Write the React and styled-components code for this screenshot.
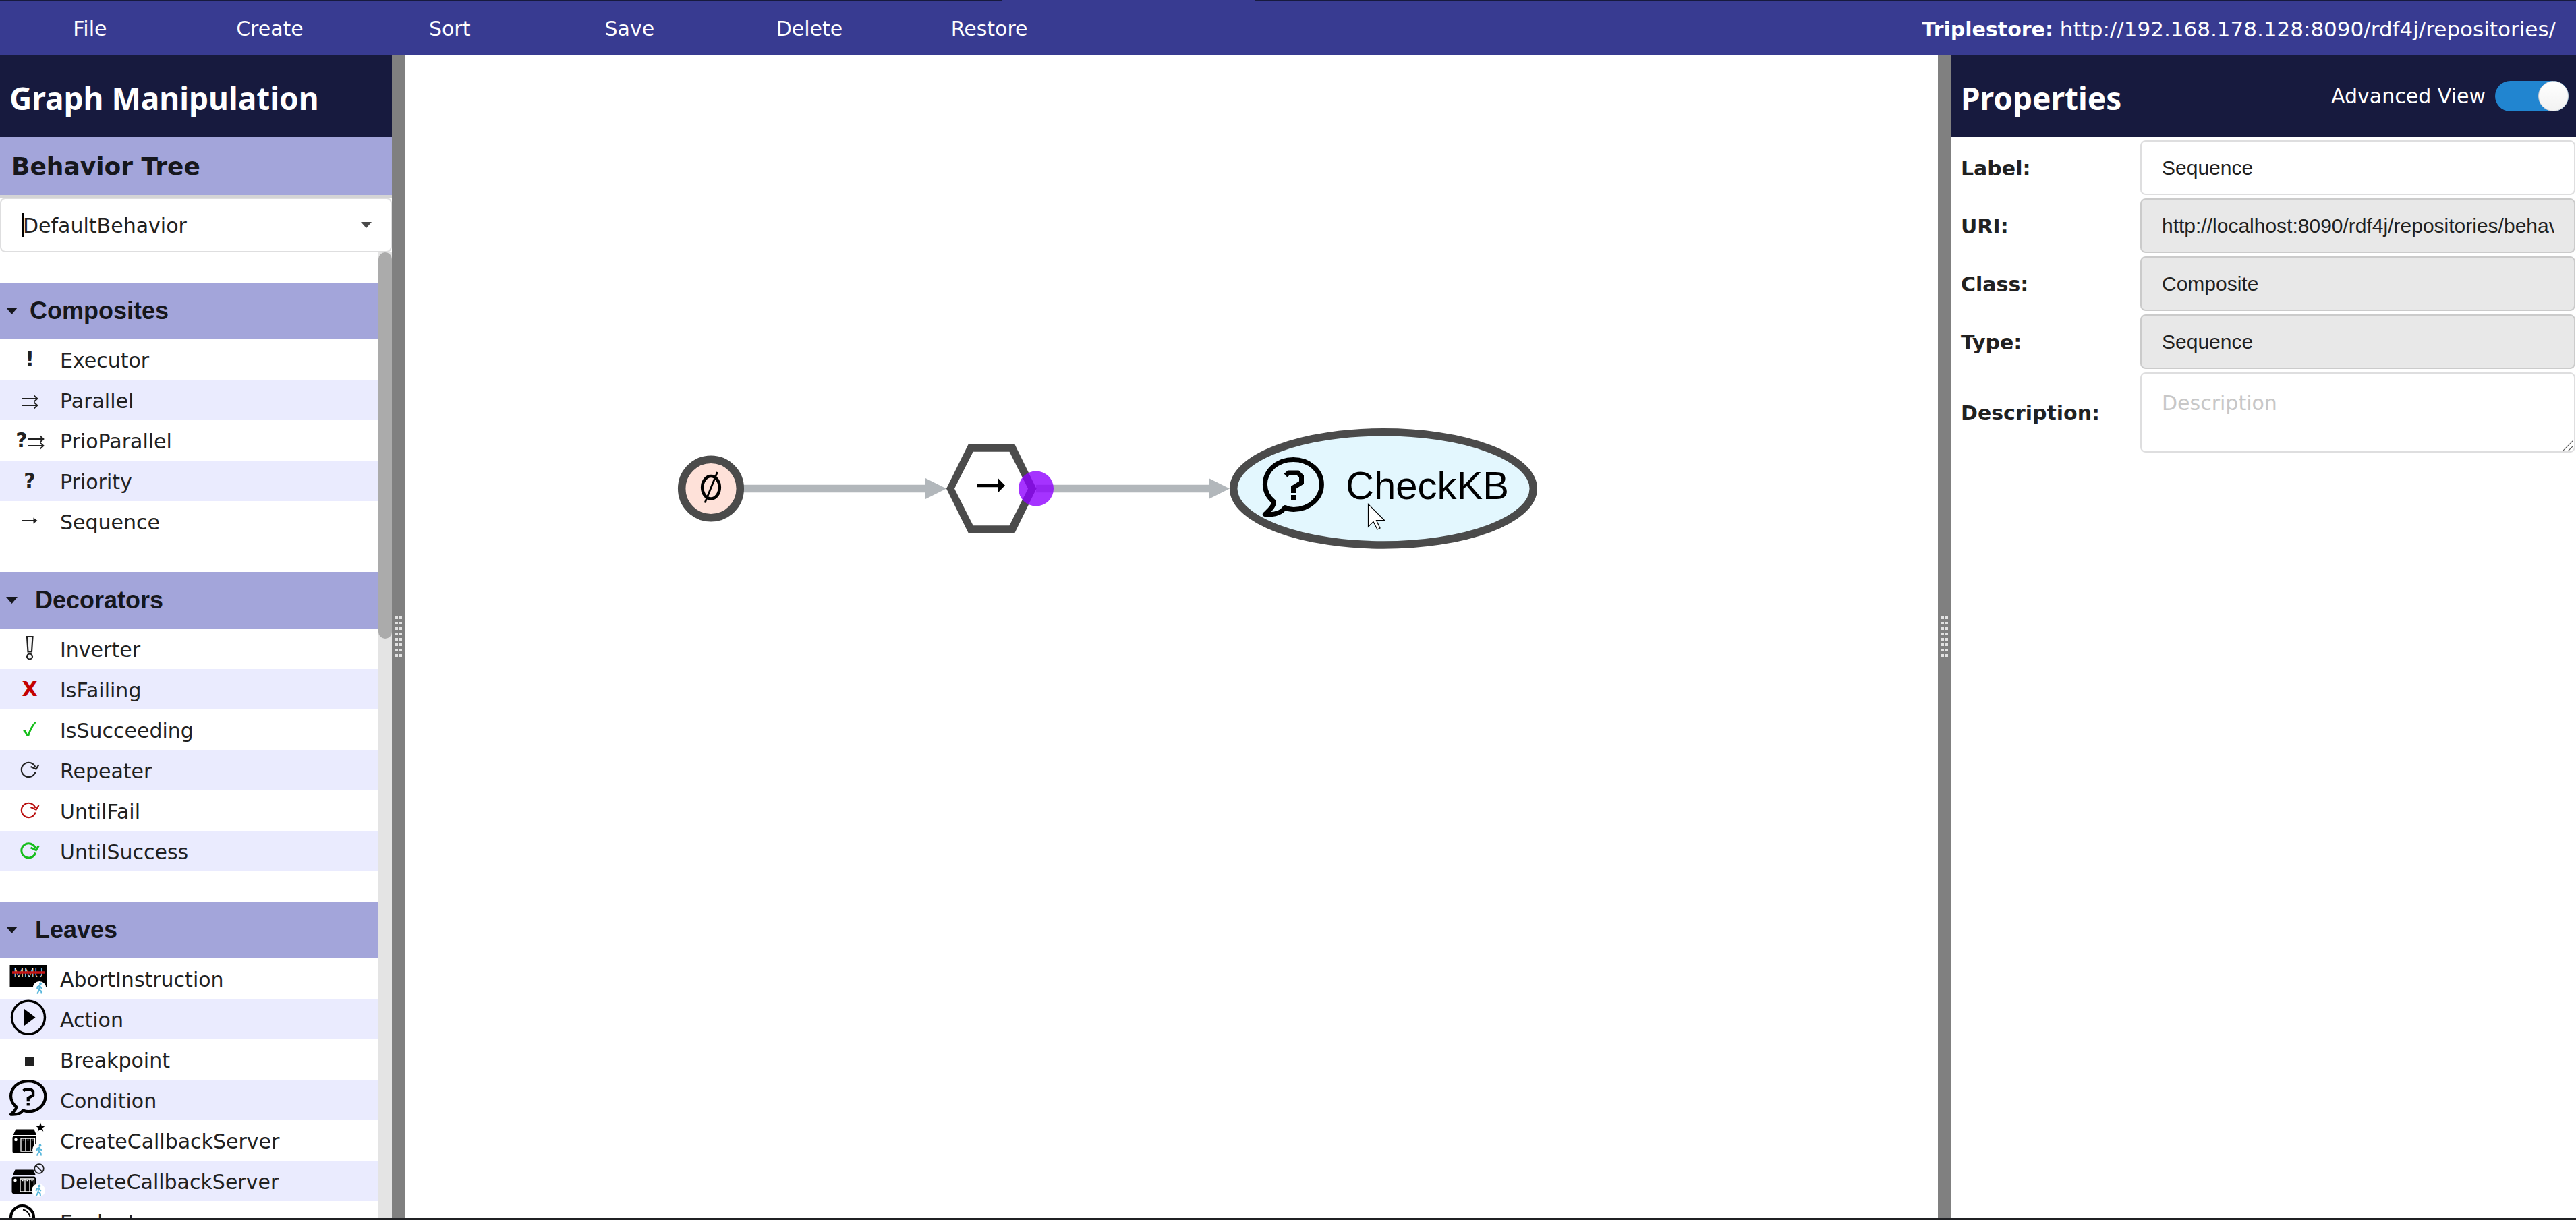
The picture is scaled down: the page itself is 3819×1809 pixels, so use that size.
import React from "react";
import styled, { createGlobalStyle } from "styled-components";

const sans = `Verdana, "DejaVu Sans", sans-serif`;
const arial = `"Liberation Sans", Arial, sans-serif`;
const title = `"Segoe UI", "Noto Sans", "Open Sans", sans-serif`;

const Global = createGlobalStyle`
  *, *::before, *::after { box-sizing: border-box; }
  body { margin: 0; background: #fff; color: #212121; font: 30px/36px ${sans}; overflow: hidden; }
  button, input, select, textarea { font: inherit; color: inherit; margin: 0; }
`;

const Page = styled.div`
  display: flex;
  flex-direction: column;
  height: 100vh;
  border-bottom: 3px solid #202124;
`;

const TabStrip = styled.div`
  display: grid;
  grid-template-columns: 1486fr 374fr 1959fr;
  flex: none;
  height: 2px;
  background: #171a3e;
`;

const ActiveTab = styled.div`
  grid-column: 2;
  background: #383b91;
`;

const MenuBar = styled.header`
  display: flex;
  flex: none;
  align-items: center;
  justify-content: space-between;
  height: 80px;
  padding-right: 30px;
  background: #383b91;
  color: #fff;
`;

const Menu = styled.nav`
  display: grid;
  grid-template-columns: repeat(6, 1fr);
  width: 1600px;
`;

const MenuItem = styled.button`
  height: 80px;
  padding: 2px 0 0;
  border: 0;
  background: none;
  text-align: center;
`;

const Store = styled.p`
  margin: 0;
  padding-top: 2px;
  white-space: pre;
  font-size: 31px;
`;

const StoreName = styled.strong`
  font-size: 30px;
`;

const Workspace = styled.div`
  display: grid;
  grid-template-columns: 581px 20px 1fr 20px 926px;
  flex: 1;
  min-height: 0;
`;

const Panel = styled.section`
  display: flex;
  flex-direction: column;
  min-width: 0;
  min-height: 0;
`;

const PanelHead = styled.div`
  display: flex;
  flex: none;
  align-items: center;
  justify-content: space-between;
  height: 121px;
  padding: 0 11px 0 14px;
  background: #171a3e;
  color: #fff;
`;

const PanelTitle = styled.h1`
  margin: 0;
  padding-top: 4px;
  font: bold 46px/60px ${title};
`;

const TreeTitle = styled.h2`
  flex: none;
  margin: 0;
  height: 90px;
  padding: 2px 0 0 17px;
  border-bottom: 4px solid #d4d4d5;
  background: #a3a5da;
  color: #16171d;
  font: bold 36px/84px ${sans};
`;

const Picker = styled.div`
  display: flex;
  position: relative;
  flex: none;
  align-items: center;
`;

const PickerSelect = styled.select`
  appearance: none;
  width: 100%;
  height: 81px;
  padding: 2px 32px 0;
  border: 2px solid #dededf;
  border-radius: 8px;
  background: #fff;
`;

const PickerCaret = styled.svg`
  position: absolute;
  right: 30px;
  width: 16px;
  height: 9px;
  pointer-events: none;
`;

const TextCursor = styled.span`
  position: absolute;
  left: 33px;
  width: 2px;
  height: 36px;
  background: #000;
`;

const ListArea = styled.div`
  display: flex;
  flex: 1;
  min-height: 0;
`;

const Lists = styled.div`
  flex: 1;
  overflow: hidden;
`;

const Track = styled.div`
  width: 20px;
  background: #e4e4e4;
`;

const Thumb = styled.div`
  height: 40%;
  border-radius: 10px;
  background: #ababab;
`;

const Group = styled.section`
  padding-top: 45px;
`;

const GroupHead = styled.button`
  display: flex;
  align-items: center;
  gap: ${(p) => (p.$wide ? 26 : 18)}px;
  width: 100%;
  height: 84px;
  padding: 0 9px;
  border: 0;
  background: #a3a5da;
  color: #16171d;
  font: bold 36px/42px ${arial};
`;

const Items = styled.ul`
  margin: 0;
  padding: 0;
  list-style: none;
`;

const Item = styled.li`
  &:nth-child(even) { background: #eaebfe; }
`;

const ItemButton = styled.button`
  display: flex;
  align-items: center;
  width: 100%;
  height: 60px;
  padding: 0;
  border: 0;
  background: none;
`;

const ItemName = styled.span`
  padding: 3px 0 0 1px;
`;

const Icon = styled.svg`
  flex: none;
  width: 88px;
  height: 60px;
`;

const Splitter = styled.div`
  display: flex;
  align-items: center;
  justify-content: center;
  background: #808080;
`;

const Grip = styled.svg`
  width: 10px;
  height: 60px;
`;

const Canvas = styled.main`
  position: relative;
  overflow: hidden;
  min-width: 0;
`;

const Graph = styled.svg`
  display: block;
  width: 2272px;
  height: 100%;
`;

const ViewSwitch = styled.label`
  display: flex;
  align-items: center;
  gap: 14px;
`;

const Switch = styled.input`
  appearance: none;
  display: flex;
  justify-content: flex-end;
  width: 109px;
  height: 45px;
  border-radius: 23px;
  background: #2185d0;
  &::before {
    content: "";
    width: 45px;
    height: 45px;
    border: 1px solid #cfd0d4;
    border-radius: 50%;
    background: linear-gradient(#fff, #f2f2f2);
  }
`;

const Form = styled.form`
  display: grid;
  grid-template-columns: 266px 1fr;
  align-items: center;
  row-gap: 5px;
  padding: 5px 1px 0 14px;
`;

const FieldLabel = styled.label`
  padding-top: 2px;
  font-weight: bold;
`;

const Field = styled.input`
  width: 100%;
  height: 81px;
  padding: 0 30px;
  border: 2px solid ${(p) => (p.readOnly ? "#cbcbcb" : "#dededf")};
  border-radius: 8px;
  background: ${(p) => (p.readOnly ? "#e8e8e8" : "#fff")};
  font-family: ${arial};
  outline: 0;
`;

const AreaBox = styled.div`
  position: relative;
`;

const Area = styled.textarea`
  display: block;
  width: 100%;
  height: 119px;
  padding: 26px 30px;
  border: 2px solid #dededf;
  border-radius: 8px;
  resize: none;
  &::placeholder { color: #c7c7c7; opacity: 1; }
`;

const AreaGrip = styled.svg`
  position: absolute;
  right: 3px;
  bottom: 2px;
  width: 16px;
  height: 16px;
  pointer-events: none;
`;

const INK = "#212121";

const Glyph = ({ x = 44, fill = INK, children }) => (
  <text x={x} y="40" textAnchor="middle" fill={fill} fontWeight="bold" fontSize="30">{children}</text>
);

const TwinArrows = ({ x = 33 }) => (
  <path
    transform={`translate(${x} 0)`}
    d="M0 28H22M17.500 23.500L22.500 28L17.500 32.500M0 38H22M17.500 33.500L22.500 38L17.500 42.500"
    fill="none" stroke={INK} strokeWidth="1.800"
  />
);

const Loop = ({ color, weight = 2.2 }) => (
  <g fill="none" stroke={color} strokeWidth={weight}>
    <path d="M52.600 32.500A10.600 10.600 0 1 1 52.500 26" />
    <path d="M45.500 25L53.500 28.500L57.500 22" />
  </g>
);

const Walker = ({ x, y, r = 10 }) => (
  <g transform={`translate(${x} ${y})`}>
    <circle r={r} fill="#fff" />
    <circle cx="1.500" cy="-6.500" r="1.900" fill="#5bb8dc" />
    <path
      d="M0.500 -4L-0.500 2L2.500 4.500L3 8.500M-0.500 2L-1.500 5L-3.500 8.500M-3.500 1L-2.800 -2L0.500 -3.500L2.200 -0.500L4.200 0.500"
      fill="none" stroke="#5bb8dc" strokeWidth="2"
    />
  </g>
);

const Bubble = ({ transform }) => (
  <g transform={transform} fill="none" stroke="#000" strokeWidth="7" strokeLinejoin="round">
    <path d="M33 74.500Q39 77.400 46 77.400C69 77.400 87.400 61 87.400 40.300S69 3.400 45.300 3.400S3.400 20 3.400 40.300C3.400 51 9 60 16.500 66C17 73 9 79 3.400 84.500C16 85.500 27 84 33 74.500Z" />
    <path d="M34 27L38.500 23H52L57.500 28.500V37.500L45.500 45V53" strokeLinejoin="miter" />
    <path d="M42 59.500H49" />
  </g>
);

const Server = ({ x = 0, children }) => (
  <g transform={`translate(${x} 0)`}>
    <path d="M23.500 13.500H50.500L54 22H19.500Z" />
    <rect x="18.500" y="23.500" width="35.500" height="25.500" rx="3" />
    <circle cx="23.500" cy="29" r="2.300" fill="#fff" />
    <path d="M31 27H51.500V46H31ZM38 27V46M45 27V46" fill="none" stroke="#fff" strokeWidth="1.300" />
    <path d="M33.500 29.500H35.500M40.500 29.500H42.500M47.500 29.500H49.500" stroke="#fff" strokeWidth="1.500" />
    {children}
  </g>
);

const icons = {
  Executor: <Glyph>!</Glyph>,
  Parallel: <TwinArrows />,
  PrioParallel: <><Glyph x={32}>?</Glyph><TwinArrows x={42} /></>,
  Priority: <Glyph>?</Glyph>,
  Sequence: <><path d="M33 29H51" stroke={INK} strokeWidth="2" /><path d="M49.500 24.500L55.500 29L49.500 33.500Z" fill={INK} /></>,
  Inverter: (
    <g fill="#f4f4f4" stroke={INK} strokeWidth="2.200">
      <path d="M40 12H48.500L47 34.500H41.500Z" /><circle cx="44" cy="41.500" r="4" />
    </g>
  ),
  IsFailing: <Glyph fill="#c40000">X</Glyph>,
  IsSucceeding: <path d="M34 31.500L37.500 30.500Q39.500 33 41 37Q45 25 52 18H54.500Q46 29 43 40H40Q37 34.500 34 31.500Z" fill="#15bd1a" />,
  Repeater: <Loop color={INK} />,
  UntilFail: <Loop color="#b80d0d" />,
  UntilSuccess: <Loop color="#15bd1a" weight={3} />,
  AbortInstruction: (
    <>
      <rect x="14.500" y="10" width="55" height="33" />
      <text x="42" y="28" textAnchor="middle" fill="#fff" fontFamily="Open Sans, sans-serif" fontWeight="300" fontSize="18">MMU</text>
      <path d="M18 21H66" stroke="#c61414" strokeWidth="3.500" />
      <Walker x={58.5} y={44} />
    </>
  ),
  Action: <><circle cx="42" cy="27.600" r="24.500" fill="none" stroke="#000" strokeWidth="3.400" /><path d="M36 15L52.500 27.600L36 40Z" /></>,
  Breakpoint: <rect x="37" y="26" width="14" height="14" fill={INK} />,
  Condition: <Bubble transform="translate(14 0) scale(0.61)" />,
  CreateCallbackServer: (
    <Server>
      <path d="M60 3.500L61.800 8.500L67 8.600L62.800 11.800L64.300 16.800L60 13.800L55.700 16.800L57.200 11.800L53 8.600L58.200 8.500Z" />
      <Walker x={58} y={44} />
    </Server>
  ),
  DeleteCallbackServer: (
    <Server x={-1}>
      <circle cx="59" cy="12" r="6.800" fill="none" stroke={INK} strokeWidth="1.700" />
      <path d="M54.200 7.200L63.800 16.800" stroke={INK} strokeWidth="1.700" />
      <Walker x={58} y={44} />
    </Server>
  ),
  Evaluate: (
    <g fill="none" stroke="#000">
      <circle cx="33" cy="24" r="17" strokeWidth="4.200" /><path d="M34 12.500Q42 14 44.500 23" strokeWidth="2" />
    </g>
  ),
};

const groups = [
  { name: "Composites", items: ["Executor", "Parallel", "PrioParallel", "Priority", "Sequence"] },
  { name: "Decorators", wide: true, items: ["Inverter", "IsFailing", "IsSucceeding", "Repeater", "UntilFail", "UntilSuccess"] },
  { name: "Leaves", wide: true, items: ["AbortInstruction", "Action", "Breakpoint", "Condition", "CreateCallbackServer", "DeleteCallbackServer", "Evaluate"] },
];

const fields = [
  { name: "Label", value: "Sequence" },
  { name: "URI", value: "http://localhost:8090/rdf4j/repositories/behavior", locked: true },
  { name: "Class", value: "Composite", locked: true },
  { name: "Type", value: "Sequence", locked: true },
];

const Handle = () => (
  <Splitter>
    <Grip viewBox="0 0 10 60" aria-hidden="true">
      {Array.from({ length: 8 }, (_, i) => (
        <path key={i} d={`M0 ${2 + i * 8}H4M6 ${2 + i * 8}H10`} stroke="#e2e2e2" strokeWidth="4" />
      ))}
    </Grip>
  </Splitter>
);

const BehaviorGraph = () => (
  <Graph viewBox="601 82 2272 1724" preserveAspectRatio="xMinYMin meet" role="img" aria-label="Behavior tree graph">
    <g stroke="#b2b7bb" strokeWidth="11.500">
      <path d="M1100 724.500H1374" /><path d="M1536 724.500H1794" />
    </g>
    <path d="M1372 709L1403 724.500L1372 740ZM1792 709L1823 724.500L1792 740Z" fill="#b2b7bb" />
    <circle cx="1054" cy="724.500" r="43.300" fill="#fee1d9" stroke="#4b4b4b" strokeWidth="11.500" />
    <g fill="none" stroke="#000">
      <ellipse cx="1054" cy="722.800" rx="12.800" ry="16.800" strokeWidth="4.600" />
      <path d="M1045 745.500L1063.500 700" strokeWidth="2.800" />
    </g>
    <path d="M1403 724.500L1436 658H1504L1536.500 724.500L1504 791H1436Z" fill="#4b4b4b" />
    <path d="M1415 724.500L1442.700 669.800H1496.500L1524 724.500L1496.500 779.200H1442.700Z" fill="#fff" />
    <path d="M1448 719.700H1481" stroke="#000" strokeWidth="5" />
    <path d="M1480 709.500L1490 719.700L1480 730Z" />
    <circle cx="1536" cy="724.500" r="26" fill="#8f00ff" fillOpacity="0.8" />
    <ellipse cx="2051" cy="724.400" rx="222.300" ry="83.600" fill="#e3f7fe" stroke="#4b4b4b" strokeWidth="11.500" />
    <Bubble transform="translate(1872 678)" />
    <text x="2116" y="740" textAnchor="middle" fontFamily="Liberation Sans, Arial, sans-serif" fontSize="58">CheckKB</text>
    <path d="M2028.500 747.500V781L2036 773.500L2042 785L2046 783L2040.500 771.500H2052.500Z" fill="#fff" stroke="#000" strokeWidth="1.200" />
  </Graph>
);

export default function App() {
  return (
    <Page>
      <Global />
      <TabStrip><ActiveTab /></TabStrip>
      <MenuBar>
        <Menu>
          {["File", "Create", "Sort", "Save", "Delete", "Restore"].map((m) => (
            <MenuItem key={m} type="button">{m}</MenuItem>
          ))}
        </Menu>
        <Store><StoreName>Triplestore:</StoreName> http://192.168.178.128:8090/rdf4j/repositories/</Store>
      </MenuBar>
      <Workspace>
        <Panel>
          <PanelHead><PanelTitle>Graph Manipulation</PanelTitle></PanelHead>
          <TreeTitle>Behavior Tree</TreeTitle>
          <Picker>
            <PickerSelect aria-label="Behavior tree"><option>DefaultBehavior</option></PickerSelect>
            <TextCursor />
            <PickerCaret viewBox="0 0 16 9"><path d="M0 0H16L8 9Z" fill="#4a4a4a" /></PickerCaret>
          </Picker>
          <ListArea>
            <Lists>
              {groups.map((g) => (
                <Group key={g.name}>
                  <GroupHead type="button" $wide={g.wide}>
                    <svg width="17" height="10" viewBox="0 0 17 10" aria-hidden="true"><path d="M0 0H17L8.500 10Z" fill="#16171d" /></svg>
                    {g.name}
                  </GroupHead>
                  <Items>
                    {g.items.map((name) => (
                      <Item key={name}>
                        <ItemButton type="button">
                          <Icon viewBox="0 0 88 60" aria-hidden="true">{icons[name]}</Icon>
                          <ItemName>{name}</ItemName>
                        </ItemButton>
                      </Item>
                    ))}
                  </Items>
                </Group>
              ))}
            </Lists>
            <Track><Thumb /></Track>
          </ListArea>
        </Panel>
        <Handle />
        <Canvas><BehaviorGraph /></Canvas>
        <Handle />
        <Panel>
          <PanelHead>
            <PanelTitle>Properties</PanelTitle>
            <ViewSwitch>Advanced View<Switch type="checkbox" role="switch" defaultChecked /></ViewSwitch>
          </PanelHead>
          <Form>
            {fields.map((f) => (
              <React.Fragment key={f.name}>
                <FieldLabel htmlFor={f.name}>{f.name}:</FieldLabel>
                <Field id={f.name} defaultValue={f.value} readOnly={!!f.locked} />
              </React.Fragment>
            ))}
            <FieldLabel htmlFor="description">Description:</FieldLabel>
            <AreaBox>
              <Area id="description" placeholder="Description" />
              <AreaGrip viewBox="0 0 16 16" aria-hidden="true">
                <path d="M0 16L16 0M8 16L16 8" stroke="#555" strokeWidth="1.200" />
              </AreaGrip>
            </AreaBox>
          </Form>
        </Panel>
      </Workspace>
    </Page>
  );
}
